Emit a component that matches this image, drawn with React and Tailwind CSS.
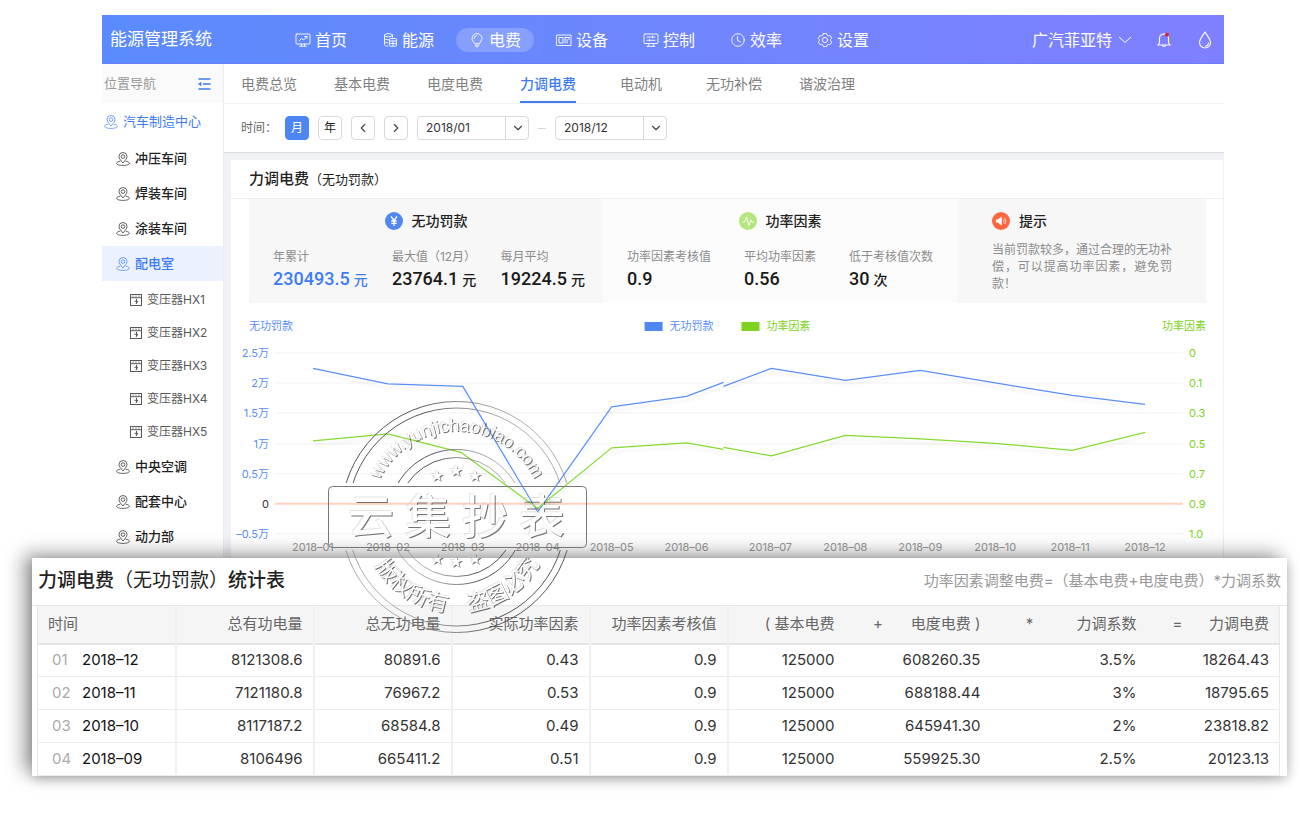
import React, { useState } from "react";
import { FiChevronDown, FiChevronLeft, FiChevronRight } from "react-icons/fi";

const navItems = [
  { label: "首页", icon: "home" },
  { label: "能源", icon: "energy" },
  { label: "电费", icon: "bulb" },
  { label: "设备", icon: "device" },
  { label: "控制", icon: "control" },
  { label: "效率", icon: "clock" },
  { label: "设置", icon: "gear" },
];

const tabs = ["电费总览", "基本电费", "电度电费", "力调电费", "电动机", "无功补偿", "谐波治理"];

const workshops = ["冲压车间", "焊装车间", "涂装车间", "配电室"];
const transformers = ["变压器HX1", "变压器HX2", "变压器HX3", "变压器HX4", "变压器HX5"];
const others = ["中央空调", "配套中心", "动力部"];

const penalty = [
  { label: "年累计", value: "230493.5", unit: "元", active: true },
  { label: "最大值（12月）", value: "23764.1", unit: "元" },
  { label: "每月平均", value: "19224.5", unit: "元" },
];

const factor = [
  { label: "功率因素考核值", value: "0.9" },
  { label: "平均功率因素", value: "0.56" },
  { label: "低于考核值次数", value: "30", unit: "次" },
];

const rows = [
  ["2018–12", "8121308.6", "80891.6", "0.43", "0.9", "125000", "608260.35", "3.5%", "18264.43"],
  ["2018–11", "7121180.8", "76967.2", "0.53", "0.9", "125000", "688188.44", "3%", "18795.65"],
  ["2018–10", "8117187.2", "68584.8", "0.49", "0.9", "125000", "645941.30", "2%", "23818.82"],
  ["2018–09", "8106496", "665411.2", "0.51", "0.9", "125000", "559925.30", "2.5%", "20123.13"],
];

const gridLines = [
  { y: 50, left: "2.5万", right: "0" },
  { y: 80, left: "2万", right: "0.1" },
  { y: 110, left: "1.5万", right: "0.3" },
  { y: 141, left: "1万", right: "0.5" },
  { y: 171, left: "0.5万", right: "0.7" },
  { y: 201, left: "0", right: "0.9" },
  { y: 231, left: "–0.5万", right: "1.0" },
];

const months = [
  { x: 82, label: "2018–01" },
  { x: 157, label: "2018–02" },
  { x: 232, label: "2018–03" },
  { x: 307, label: "2018–04" },
  { x: 381, label: "2018–05" },
  { x: 456, label: "2018–06" },
  { x: 540, label: "2018–07" },
  { x: 615, label: "2018–08" },
  { x: 690, label: "2018–09" },
  { x: 765, label: "2018–10" },
  { x: 840, label: "2018–11" },
  { x: 915, label: "2018–12" },
];

function NavIcon({ name }) {
  return (
    <svg
      viewBox="0 0 16 16"
      className="w-4 h-4"
      fill="none"
      stroke="currentColor"
      strokeWidth="0.9"
      strokeLinecap="round"
      strokeLinejoin="round"
    >
      {name === "home" && (
        <>
          <rect x="1" y="2" width="14" height="10" rx="1" />
          <path d="M4 9l2.5-2.5L8.5 8 12 4.5M9.7 4.5H12v2M6.5 12v2M9.5 12v2M4.5 14.2h7" />
        </>
      )}
      {name === "energy" && (
        <>
          <ellipse cx="6.5" cy="3.2" rx="4" ry="1.6" />
          <path d="M2.5 3.2v9.3c0 1 1.5 1.6 3.5 1.6M10.5 3.2v2M2.5 6.2c0 1 1.7 1.6 4 1.6M2.5 9.3c0 1 1.500 1.6 3.5 1.6" />
          <rect x="7.5" y="6.5" width="7" height="7.7" rx="1" />
          <path d="M7.5 9h7M7.5 11.6h7M11 9v5" />
        </>
      )}
      {name === "bulb" && (
        <>
          <path d="M8 1.5a5 5 0 0 1 5 5c0 1.700-1.600 3-2.600 5.200H5.600C4.600 9.500 3 8.200 3 6.500a5 5 0 0 1 5-5zM6 13.200h4M7 14.700h2" />
          <path d="M5 6.300a3 3 0 0 1 2.300-2.700" />
        </>
      )}
      {name === "device" && (
        <>
          <rect x="1" y="3" width="14" height="10.5" />
          <rect x="3.5" y="5.5" width="3.5" height="5.5" />
          <path d="M9 5.5h4M9 5.5V11M11 7.5V11M13 5.5v2" />
        </>
      )}
      {name === "control" && (
        <>
          <rect x="1" y="2" width="14" height="9.5" rx="1" />
          <path d="M4 5h8M4 8.300h8M9.500 4v2M6.500 7.300v2M6 11.500L5 14.300M10 11.500l1 2.800M4 14.300h8" />
        </>
      )}
      {name === "clock" && (
        <>
          <circle cx="8" cy="8" r="6.3" />
          <path d="M7.5 4.5v4l3 1.500" />
        </>
      )}
      {name === "gear" && (
        <>
          <path d="M6.500 1.500h3l.6 1.600 1.400.8 1.700-.3 1.500 2.600-1.100 1.300v1.200l1.100 1.300-1.500 2.500-1.700-.2-1.400.8-.6 1.500h-3l-.6-1.500-1.400-.8-1.700.2L1.300 10l1.100-1.300V7.500L1.300 6.200l1.500-2.600 1.700.3 1.400-.8z" />
          <circle cx="8" cy="8" r="2.6" />
        </>
      )}
    </svg>
  );
}

function PinIcon() {
  return (
    <svg viewBox="0 0 14 14" className="w-3.5 h-3.5 shrink-0" fill="none" stroke="currentColor" strokeWidth="0.7">
      <path d="M7 11C4.800 8.300 3 6.500 3 4.500a4 4 0 0 1 8 0C11 6.500 9.200 8.300 7 11z" />
      <circle cx="7" cy="4.6" r="1.8" />
      <path d="M4.300 9.200C2 9.600.6 10.400.6 11.300c0 1.200 2.800 2.100 6.400 2.100s6.400-.9 6.400-2.100c0-.9-1.400-1.700-3.700-2.100" />
    </svg>
  );
}

function CabinetIcon() {
  return (
    <svg viewBox="0 0 12 12" className="w-3 h-3 shrink-0" fill="none" stroke="currentColor" strokeWidth="1">
      <rect x="0.5" y="0.5" width="11" height="11" />
      <path d="M0.5 3.700h11" />
      <path d="M2.500 2.100h1.200M5.400 2.100h1.200M8.300 2.100h1.200" />
      <path d="M6.500 4.800v5M4.500 7.300h3.300L6 9.800" />
    </svg>
  );
}

function SideItem({ label, active }) {
  return (
    <li>
      <a
        href="#"
        className={`flex items-center h-[35px] pl-3.5 gap-[5px] text-[13px] font-medium ${
          active ? "bg-[#ebf2fd] text-[#3e7bf5]" : "text-[#1f1f1f]"
        }`}
      >
        <PinIcon />
        {label}
      </a>
    </li>
  );
}

function Sidebar() {
  return (
    <aside className="w-[121px] shrink-0 bg-white">
      <div className="h-[39px] bg-[#fafafa] flex items-center justify-between pl-0.5 pr-3">
        <span className="text-[13px] text-[#999]">位置导航</span>
        <button type="button" aria-label="收起导航" className="text-[#3e7bf5]">
          <svg viewBox="0 0 14 14" className="w-3.5 h-3.5" fill="none" stroke="currentColor" strokeWidth="1.5">
            <path d="M1.5 2h12M6 7h7.500M1.500 12h12" />
            <path d="M4.300 4.800v4.400L1 7z" fill="currentColor" stroke="none" />
          </svg>
        </button>
      </div>
      <a href="#" className="flex items-center h-[38px] pl-0.5 gap-[5px] text-[13px] text-[#3e7bf5]">
        <PinIcon />
        汽车制造中心
      </a>
      <ul>
        {workshops.map((name) => (
          <SideItem key={name} label={name} active={name === "配电室"} />
        ))}
      </ul>
      <ul className="pt-0.5 pb-px">
        {transformers.map((name) => (
          <li key={name}>
            <a href="#" className="flex items-center h-[33px] pl-7 gap-[5px] text-xs text-[#595959]">
              <CabinetIcon />
              {name}
            </a>
          </li>
        ))}
      </ul>
      <ul>
        {others.map((name) => (
          <SideItem key={name} label={name} />
        ))}
      </ul>
    </aside>
  );
}

function MonthSelect({ label, value, onChange, options }) {
  return (
    <div className="relative w-28 h-6">
      <select
        aria-label={label}
        value={value}
        onChange={onChange}
        className="block appearance-none w-full h-6 pl-2 pr-6 text-xs text-[#333] bg-white border border-[#d9d9d9] rounded-sm"
      >
        {options.map((o) => (
          <option key={o}>{o}</option>
        ))}
      </select>
      <span className="absolute top-0 right-0 h-6 w-6 border-l border-[#d9d9d9] flex items-center justify-center pointer-events-none">
        <FiChevronDown className="text-sm text-[#444]" />
      </span>
    </div>
  );
}

function Stat({ item }) {
  return (
    <div>
      <p className="text-xs leading-5 text-[#8c8c8c]">{item.label}</p>
      <p className={`leading-6 font-medium whitespace-nowrap ${item.active ? "text-[#3e7bf5]" : "text-[#1a1a1a]"}`}>
        <span className="font-['Roboto'] text-lg leading-6">{item.value}</span>
        {item.unit && <span className="text-sm ml-1">{item.unit}</span>}
      </p>
    </div>
  );
}

function Chart() {
  return (
    <svg
      viewBox="0 0 993 255"
      className="block w-full font-['Inter','Noto_Sans_CJK_SC',sans-serif]"
      fontSize="11"
      role="img"
      aria-label="力调电费走势"
    >
      <defs>
        <filter id="lineShadow" x="-5%" y="-20%" width="110%" height="150%">
          <feDropShadow dx="0" dy="4" stdDeviation="1.5" floodColor="#000" floodOpacity="0.07" />
        </filter>
      </defs>

      {/* Legend */}
      <text x="18" y="27" fill="#5b8ff5">无功罚款</text>
      <rect x="414" y="19" width="18" height="9" fill="#5087f3" />
      <text x="439" y="27" fill="#5b8ff5">无功罚款</text>
      <rect x="511" y="19" width="18" height="9" fill="#7ed321" />
      <text x="536" y="27" fill="#7ed321">功率因素</text>
      <text x="976" y="27" fill="#7ed321" textAnchor="end">功率因素</text>

      {/* Axes */}
      {gridLines.map((g) => (
        <g key={g.y}>
          <line
            x1="44"
            x2="953"
            y1={g.y}
            y2={g.y}
            stroke={g.left === "0" ? "#ffcfc0" : "#f2f2f2"}
            strokeWidth={g.left === "0" ? 2 : 1}
          />
          <text x="38" y={g.y + 4} textAnchor="end" fill={g.left === "0" ? "#333" : "#5b8ff5"}>
            {g.left}
          </text>
          <text x="959" y={g.y + 4} fill="#7ed321">
            {g.right}
          </text>
        </g>
      ))}
      {months.map((m) => (
        <text key={m.x} x={m.x} y="248" textAnchor="middle" fill="#999">
          {m.label}
        </text>
      ))}

      {/* Series */}
      <g fill="none" strokeWidth="1.2" strokeLinejoin="round" filter="url(#lineShadow)">
        <g stroke="#5b8ff9">
          <polyline points="82,65.5 157,81 232,83.5 307,209 381,104 456,93.5 493,79.5" />
          <polyline points="493,83.5 541,65.5 615,77.5 690,67.5 765,80 842,92.5 915,101.5" />
        </g>
        <g stroke="#86da34">
          <polyline points="82,138 157,131 230,149.5 307,205.5 381,145 456,140 493,146.5" />
          <polyline points="493,144.5 541,153 615,132.5 690,136 765,140.5 842,147.5 915,129.5" />
        </g>
      </g>
    </svg>
  );
}

const starPath = "M0-6L1.500-2H6L2.400.8 3.800 5 0 2.400-3.800 5-2.400.8-6-2h4.500z";

// Copyright stamp that lies over both panels
function Stamp() {
  return (
    <svg
      viewBox="0 0 262 238"
      className="absolute left-[294px] -top-[159px] w-[262px] h-[238px] pointer-events-none"
      aria-hidden="true"
    >
      <defs>
        <linearGradient id="ring" x1="0" y1="1" x2="1" y2="0">
          <stop offset="0" stopColor="#bbb" stopOpacity="0.5" />
          <stop offset="0.35" stopColor="#555" />
          <stop offset="0.65" stopColor="#555" />
          <stop offset="1" stopColor="#bbb" stopOpacity="0.5" />
        </linearGradient>
        <clipPath id="outside">
          <rect x="0" y="0" width="262" height="84" />
          <rect x="0" y="151" width="262" height="87" />
        </clipPath>
        <filter id="emboss" x="-10%" y="-10%" width="120%" height="120%">
          <feOffset in="SourceAlpha" dx="1" dy="1" result="down" />
          <feComposite in="down" in2="SourceAlpha" operator="out" result="darkEdge" />
          <feFlood floodColor="#444" floodOpacity="0.75" />
          <feComposite in2="darkEdge" operator="in" result="dark" />
          <feOffset in="SourceAlpha" dx="-1" dy="-1" result="up" />
          <feComposite in="up" in2="SourceAlpha" operator="out" result="lightEdge" />
          <feFlood floodColor="#ccc" floodOpacity="0.5" />
          <feComposite in2="lightEdge" operator="in" result="light" />
          <feMerge>
            <feMergeNode in="light" />
            <feMergeNode in="dark" />
          </feMerge>
        </filter>
        <path id="arcTop" d="M44.500 118a86 86 0 0 1 172 0" />
        <path id="arcBottom" d="M35.500 118a95 95 0 0 0 190 0" />
      </defs>

      <g fill="none" stroke="url(#ring)" clipPath="url(#outside)">
        <circle cx="130.5" cy="118" r="115.5" />
        <circle cx="130.5" cy="118" r="109" />
        <circle cx="130.5" cy="118" r="67.5" />
        <circle cx="130.5" cy="118" r="59.5" />
      </g>
      <rect x="2.5" y="87.5" width="258" height="61" rx="4" fill="none" stroke="#777" />

      <g filter="url(#emboss)" className="font-['Liberation_Sans','Noto_Sans_CJK_SC',sans-serif]">
        <text fontSize="18" textAnchor="middle">
          <textPath href="#arcTop" startOffset="50%">www.yunjichaobiao.com</textPath>
        </text>
        <text fontSize="22" textAnchor="middle">
          <textPath href="#arcBottom" startOffset="32%">版权所有</textPath>
        </text>
        <text fontSize="22" textAnchor="middle">
          <textPath href="#arcBottom" startOffset="69%">盗图必究</textPath>
        </text>
        <text x="22 79 136 193" y="134" fontSize="46" fontWeight="500">云集抄表</text>
        <path d={starPath} transform="translate(111 77)" />
        <path d={starPath} transform="translate(130 72)" />
        <path d={starPath} transform="translate(149 77)" />
        <path d={starPath} transform="translate(111 160)" />
        <path d={starPath} transform="translate(130 163)" />
        <path d={starPath} transform="translate(149 160)" />
      </g>
    </svg>
  );
}

function ReportTable() {
  const th = "font-normal text-right pr-2.5 whitespace-nowrap";
  const line = "border-r-2 border-[#f0f0f0]";
  return (
    <section className="relative ml-8 mr-[13px] bg-white shadow-[-8px_-4px_18px_rgba(0,0,0,0.4),1px_4px_10px_rgba(0,0,0,0.2)]">
      <div className="h-12 flex items-center justify-between px-1.5 border-b border-[#e6e6e6]">
        <h2 className="text-[19px] text-[#222] font-medium">
          力调电费<span className="font-normal">（无功罚款）</span>统计表
        </h2>
        <p className="text-[15px] text-[#999]">功率因素调整电费=（基本电费+电度电费）*力调系数</p>
      </div>
      <div className="pl-[5px] pr-2">
        <table className="w-full table-fixed border-collapse border-x border-[#e8e8e8] text-[15px] text-[#333]">
          <colgroup>
            <col className="w-[138px]" />
            <col className="w-[138px]" />
            <col className="w-[138px]" />
            <col className="w-[138px]" />
            <col className="w-[138px]" />
            <col className="w-[117px]" />
            <col className="w-[51px]" />
            <col className="w-[95px]" />
            <col className="w-[70px]" />
            <col className="w-[86px]" />
            <col className="w-[50px]" />
            <col className="w-[83px]" />
          </colgroup>
          <thead>
            <tr className="h-[38px] bg-[#f5f5f5] text-[#666] border-b-2 border-[#e6e6e6]">
              <th className={`font-normal text-left pl-2.5 ${line}`}>时间</th>
              <th className={`${th} ${line}`}>总有功电量</th>
              <th className={`${th} ${line}`}>总无功电量</th>
              <th className={`${th} ${line}`}>实际功率因素</th>
              <th className={`${th} ${line}`}>功率因素考核值</th>
              <th className={th}>( 基本电费</th>
              <th className="font-normal text-center pl-4">+</th>
              <th className={th}>电度电费 )</th>
              <th className="font-normal text-center pl-2">*</th>
              <th className={th}>力调系数</th>
              <th className="font-normal text-center pl-3">=</th>
              <th className={th}>力调电费</th>
            </tr>
          </thead>
          <tbody>
            {rows.map((r, i) => (
              <tr key={r[0]} className="h-[33px] border-b border-[#ececec]">
                <td className={`pl-3.5 ${line}`}>
                  <div className="flex">
                    <span className="w-[30px] text-[#aaa]">0{i + 1}</span>
                    <span className="text-[#111]">{r[0]}</span>
                  </div>
                </td>
                {r.slice(1, 5).map((v, j) => (
                  <td key={j} className={`text-right pr-2.5 ${line}`}>
                    {v}
                  </td>
                ))}
                <td className="text-right pr-2.5">{r[5]}</td>
                <td></td>
                <td className="text-right pr-2.5">{r[6]}</td>
                <td></td>
                <td className="text-right pr-2.5">{r[7]}</td>
                <td></td>
                <td className="text-right pr-2.5">{r[8]}</td>
              </tr>
            ))}
          </tbody>
        </table>
      </div>
      <Stamp />
    </section>
  );
}

export default function App() {
  const [tab, setTab] = useState("力调电费");
  const [unit, setUnit] = useState("月");
  const [from, setFrom] = useState("2018/01");
  const [to, setTo] = useState("2018/12");

  const box = "w-6 h-6 rounded-sm border text-xs flex items-center justify-center";

  return (
    <div className="min-h-screen bg-white pt-[15px] pb-10 overflow-hidden font-['Inter','Noto_Sans_CJK_SC',sans-serif]">
      <div className="ml-[102px] mr-[76px]">
        {/* Top bar */}
        <header className="h-[49px] pt-px pl-2 pr-3 flex items-center text-white bg-linear-to-r from-[#5a8bfc] to-[#7f80ff] border-b border-[#6a7dfb]">
          <h1 className="text-[17px] whitespace-nowrap">能源管理系统</h1>
          <nav className="ml-[70px] flex gap-[9px]">
            {navItems.map((n) => (
              <a
                key={n.label}
                href="#"
                className={`w-[78px] h-6 rounded-full flex items-center justify-center gap-1 text-base whitespace-nowrap ${
                  n.label === "电费" ? "bg-white/20" : ""
                }`}
              >
                <NavIcon name={n.icon} />
                {n.label}
              </a>
            ))}
          </nav>
          <div className="ml-auto flex items-center">
            <button type="button" className="flex items-center gap-1.5 text-base whitespace-nowrap">
              广汽菲亚特
              <svg viewBox="0 0 14 8" className="w-3.5 h-2" fill="none" stroke="currentColor">
                <path d="M1 1l6 5.500L13 1" />
              </svg>
            </button>
            <button type="button" aria-label="通知" className="ml-6">
              <svg viewBox="0 0 16 18" className="w-4 h-[18px]" fill="none" stroke="currentColor" strokeWidth="1.1">
                <path d="M2 14h12c-.9-1-1.500-1.600-1.500-3V7.500C12.500 4.700 10.700 3 8 3S3.500 4.700 3.500 7.500V11c0 1.400-.6 2-1.500 3zM6.500 14.500c.2 1.300 2.800 1.300 3 0M8 3V2" />
                <circle cx="11" cy="3.7" r="2" fill="#e0202c" stroke="none" />
              </svg>
            </button>
            <button type="button" aria-label="主题" className="ml-[26px]">
              <svg viewBox="0 0 14 18" className="w-3.5 h-[18px]" fill="none" stroke="currentColor" strokeWidth="1.1">
                <path d="M7 1C4.500 5 1.500 8.300 1.500 11.500a5.500 5.500 0 0 0 11 0C12.500 8.300 9.500 5 7 1z" />
                <path d="M10.500 11.500c0 2-1.300 3.500-3.300 3.700" />
              </svg>
            </button>
          </div>
        </header>

        <div className="flex">
          <Sidebar />

          <main className="flex-1 min-w-0 border-l border-[#ececec] bg-[#f0f2f5]">
            {/* Tabs */}
            <div className="h-10 bg-white border-b border-[#f0f0f0] flex pl-[17px] gap-[37px]">
              {tabs.map((t) => (
                <button
                  key={t}
                  type="button"
                  onClick={() => setTab(t)}
                  className={`min-w-14 text-sm whitespace-nowrap border-b-2 pt-0.5 ${
                    t === tab ? "text-[#3e7bf5] border-[#3e7bf5] font-medium" : "text-[#808080] border-transparent"
                  }`}
                >
                  {t}
                </button>
              ))}
            </div>

            {/* Filters */}
            <div className="h-[49px] bg-white flex items-center pl-[17px] gap-[9px] border-b border-[#dcdcdc]">
              <span className="w-[35px] text-xs text-[#666] whitespace-nowrap">时间：</span>
              {["月", "年"].map((u) => (
                <button
                  key={u}
                  type="button"
                  onClick={() => setUnit(u)}
                  className={`${box} ${
                    u === unit ? "bg-[#4d86f2] border-[#4d86f2] text-white" : "border-[#d9d9d9] text-[#222]"
                  }`}
                >
                  {u}
                </button>
              ))}
              <button type="button" aria-label="上一个" className={`${box} border-[#d9d9d9] text-[#444]`}>
                <FiChevronLeft className="text-sm" />
              </button>
              <button type="button" aria-label="下一个" className={`${box} border-[#d9d9d9] text-[#444]`}>
                <FiChevronRight className="text-sm" />
              </button>
              <MonthSelect
                label="开始月份"
                value={from}
                onChange={(e) => setFrom(e.target.value)}
                options={["2018/01", "2018/02", "2018/03"]}
              />
              <span className="w-2 h-px bg-[#d9d9d9]"></span>
              <MonthSelect
                label="结束月份"
                value={to}
                onChange={(e) => setTo(e.target.value)}
                options={["2018/12", "2018/11", "2018/10"]}
              />
            </div>

            {/* Penalty card */}
            <section className="mt-[7px] ml-[7px] bg-white border-r border-[#f0f0f0]">
              <h2 className="h-[39px] pt-px pl-[18px] flex items-center border-b border-[#f0f0f0] text-[15px] font-medium text-[#222]">
                力调电费<span className="text-[13px] font-normal">（无功罚款）</span>
              </h2>

              <div className="ml-[18px] mr-[17px] h-[104px] grid grid-cols-[354fr_354fr_249fr]">
                <div className="bg-[#f7f7f7] pt-3">
                  <h3 className="flex items-center justify-center gap-[9px] h-5 text-sm font-medium text-[#222]">
                    <svg viewBox="0 0 18 18" className="w-[18px] h-[18px]" fill="none" stroke="#fff" strokeWidth="1.3">
                      <circle cx="9" cy="9" r="9" fill="#5087f3" stroke="none" />
                      <path d="M6 4.500l3 4 3-4M9 8.500V14M6.300 9h5.400M6.300 11.300h5.400" />
                    </svg>
                    无功罚款
                  </h3>
                  <div className="mt-4 pl-6 pr-[18px] flex justify-between">
                    {penalty.map((s) => (
                      <Stat key={s.label} item={s} />
                    ))}
                  </div>
                </div>

                <div className="bg-[#fcfcfc] pt-3">
                  <h3 className="flex items-center justify-center gap-[9px] h-5 text-sm font-medium text-[#222]">
                    <svg viewBox="0 0 18 18" className="w-[18px] h-[18px]" fill="none" stroke="#fff">
                      <circle cx="9" cy="9" r="9" fill="#b4e67d" stroke="none" />
                      <path d="M3.500 10h2L7.500 5l2.300 8.500L12 8l1 2h1.500" />
                    </svg>
                    功率因素
                  </h3>
                  <div className="mt-4 px-6 flex justify-between">
                    {factor.map((s) => (
                      <Stat key={s.label} item={s} />
                    ))}
                  </div>
                </div>

                <div className="bg-[#f7f7f7] pt-3 pl-[35px] pr-6">
                  <h3 className="flex items-center gap-[9px] h-5 text-sm font-medium text-[#222]">
                    <svg viewBox="0 0 18 18" className="w-[18px] h-[18px]" fill="none" stroke="#fff" strokeWidth="0.8">
                      <circle cx="9" cy="9" r="9" fill="#ff6740" stroke="none" />
                      <path d="M4 7.500h1.800l4-3v9l-4-3H4z" fill="#fff" stroke="none" />
                      <path d="M11.300 7.500c.8.9.8 2.100 0 3M12.500 6c1.600 1.700 1.600 4.300 0 6" />
                    </svg>
                    提示
                  </h3>
                  <p className="mt-2.5 max-w-[180px] text-xs leading-[17px] text-justify text-[#8c8c8c]">
                    当前罚款较多，通过合理的无功补偿，可以提高功率因素，避免罚款！
                  </p>
                </div>
              </div>

              <Chart />
            </section>
          </main>
        </div>
      </div>

      <ReportTable />
    </div>
  );
}
